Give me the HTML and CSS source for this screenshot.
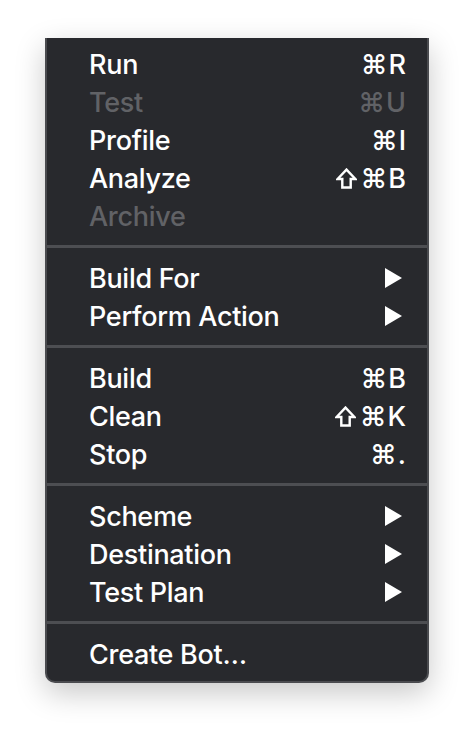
FILE: index.html
```html
<html>
<head>
<link rel="stylesheet" href="styles.css">
<title>Product menu</title>
</head>
<body>
<div class=wrap>
<div class=menu>
	<div class=group>
		<div class=item><span class=label>Run</span><span class=key>⌘R</span></div>
		<div class="item off"><span class=label>Test</span><span class=key>⌘U</span></div>
		<div class=item><span class=label>Profile</span><span class=key>⌘I</span></div>
		<div class=item><span class=label>Analyze</span><span class=key><svg class=shift viewBox="0 0 20 20"><path d="M10 1.5 L1.5 10.5 H6 V18.5 H14 V10.5 H18.5 Z"/></svg>⌘B</span></div>
		<div class="item off"><span class=label>Archive</span></div>
	</div>
	<div class=sep></div>
	<div class=group>
		<div class=item><span class=label>Build For</span><span class=arrow></span></div>
		<div class=item><span class=label>Perform Action</span><span class=arrow></span></div>
	</div>
	<div class=sep></div>
	<div class=group>
		<div class=item><span class=label>Build</span><span class=key>⌘B</span></div>
		<div class=item><span class=label>Clean</span><span class=key><svg class=shift viewBox="0 0 20 20"><path d="M10 1.5 L1.5 10.5 H6 V18.5 H14 V10.5 H18.5 Z"/></svg>⌘K</span></div>
		<div class=item><span class=label>Stop</span><span class=key>⌘.</span></div>
	</div>
	<div class=sep></div>
	<div class=group>
		<div class=item><span class=label>Scheme</span><span class=arrow></span></div>
		<div class=item><span class=label>Destination</span><span class=arrow></span></div>
		<div class=item><span class=label>Test Plan</span><span class=arrow></span></div>
	</div>
	<div class=sep></div>
	<div class=group>
		<div class=item><span class=label>Create Bot…</span></div>
	</div>
</div>
</div>
</body>
</html>
```

FILE: styles.css
```css
body{margin:0; background:#fff;}
.wrap{padding:38px 0 0 45px;}

.menu{
	width:380px;
	padding:7px 0 8px;
	background:#28292d;
	border:2px solid #4a4b4f;
	border-top:none;
	border-radius:0 0 10px 10px;
	box-shadow:0 10px 30px rgba(0,0,0,0.22);
	font-family:"Inter","DejaVu Sans",sans-serif;
	font-size:27px;
	font-weight:500;
	letter-spacing:-0.3px;
	color:#fff;
}

.item{
	display:flex;
	align-items:center;
	justify-content:space-between;
	height:38px;
	padding:0 20px 0 42px;
}
.off{color:#616266;}

.key{display:flex; align-items:center; letter-spacing:1px;}
.shift{
	flex:none;
	width:21px; height:21px;
	margin-right:4px;
	fill:none;
	stroke:#fff;
	stroke-width:2.3;
	stroke-linejoin:miter;
}

.arrow{
	width:0; height:0;
	margin-right:5px;
	border-left:17px solid #fff;
	border-top:10px solid transparent;
	border-bottom:10px solid transparent;
}

.sep{height:3px; margin:10px 0 11px; background:#4d4e52;}
```
